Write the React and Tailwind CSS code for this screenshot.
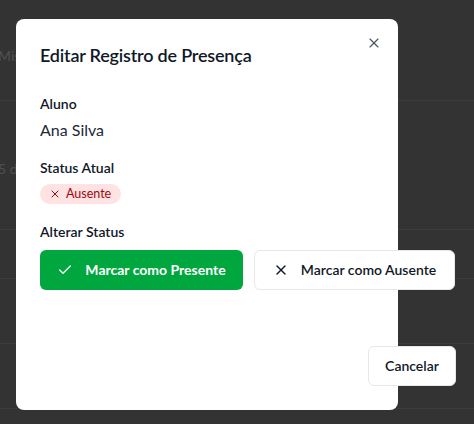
import React from 'react';
import { Check, X } from 'lucide-react';

const font = { fontFamily: 'Lato, "Noto Sans", sans-serif' };

const App = () => {
  return (
    <div className="relative w-[474px] h-[424px] overflow-hidden bg-[#333333]" style={font}>
      {/* Página ao fundo (escurecida pelo overlay) */}
      <div className="flex flex-col text-sm text-[#4f4f4f]">
        <div className="h-[101px] border-b border-[#3d3d3d] flex items-center pt-3">
          <span className="-ml-[2px] font-medium">Mis</span>
        </div>
        <div className="h-[129px] border-b border-[#3d3d3d] flex items-center pt-2">
          <span className="-ml-[2px]">5 d</span>
        </div>
        <div className="h-[49px] border-b border-[#3d3d3d]"></div>
        <div className="h-[65px] border-b border-[#3d3d3d]"></div>
        <div className="h-[65px] border-b border-[#3d3d3d]"></div>
      </div>

      {/* Modal */}
      <div className="absolute left-[16px] top-[19px] w-[382px] h-[391px] bg-white rounded-lg px-6 pt-6">
        <button className="absolute right-4 top-4 text-gray-600">
          <X className="w-4 h-4" strokeWidth={1.75} />
        </button>

        <div className="w-[416px]">
          <h2 className="text-lg leading-6 font-semibold tracking-[-0.2px] text-gray-900">Editar Registro de Presença</h2>

          <p className="mt-[27px] text-sm leading-5 font-semibold text-gray-900">Aluno</p>
          <p className="mt-1 text-base leading-6 text-gray-800">Ana Silva</p>

          <p className="mt-4 text-sm leading-5 font-semibold text-gray-900">Status Atual</p>
          <div className="mt-1.5 flex">
            <span className="inline-flex items-center gap-[5px] h-5 pl-[9px] pr-[10px] rounded-full bg-red-100 text-red-800 text-[12.5px] leading-5">
              <X className="w-3 h-3" strokeWidth={2} />
              Ausente
            </span>
          </div>

          <p className="mt-[18px] text-sm leading-5 font-semibold text-gray-900">Alterar Status</p>
          <div className="mt-2 flex gap-[11px]">
            <button className="w-[203px] h-10 shrink-0 flex items-center justify-center gap-3 rounded-md bg-green-600 text-white text-sm font-bold">
              <Check className="w-4 h-4" strokeWidth={2} />
              Marcar como Presente
            </button>
            <button className="w-[201px] h-10 shrink-0 flex items-center justify-center gap-3 rounded-md border border-gray-200 bg-white text-gray-900 text-sm font-semibold">
              <X className="w-4 h-4" strokeWidth={2} />
              Marcar como Ausente
            </button>
          </div>

          <div className="mt-14 flex justify-end">
            <button className="w-[88px] h-10 rounded-md border border-gray-200 bg-white text-gray-900 text-sm font-semibold">
              Cancelar
            </button>
          </div>
        </div>
      </div>
    </div>
  );
};

export default App;
